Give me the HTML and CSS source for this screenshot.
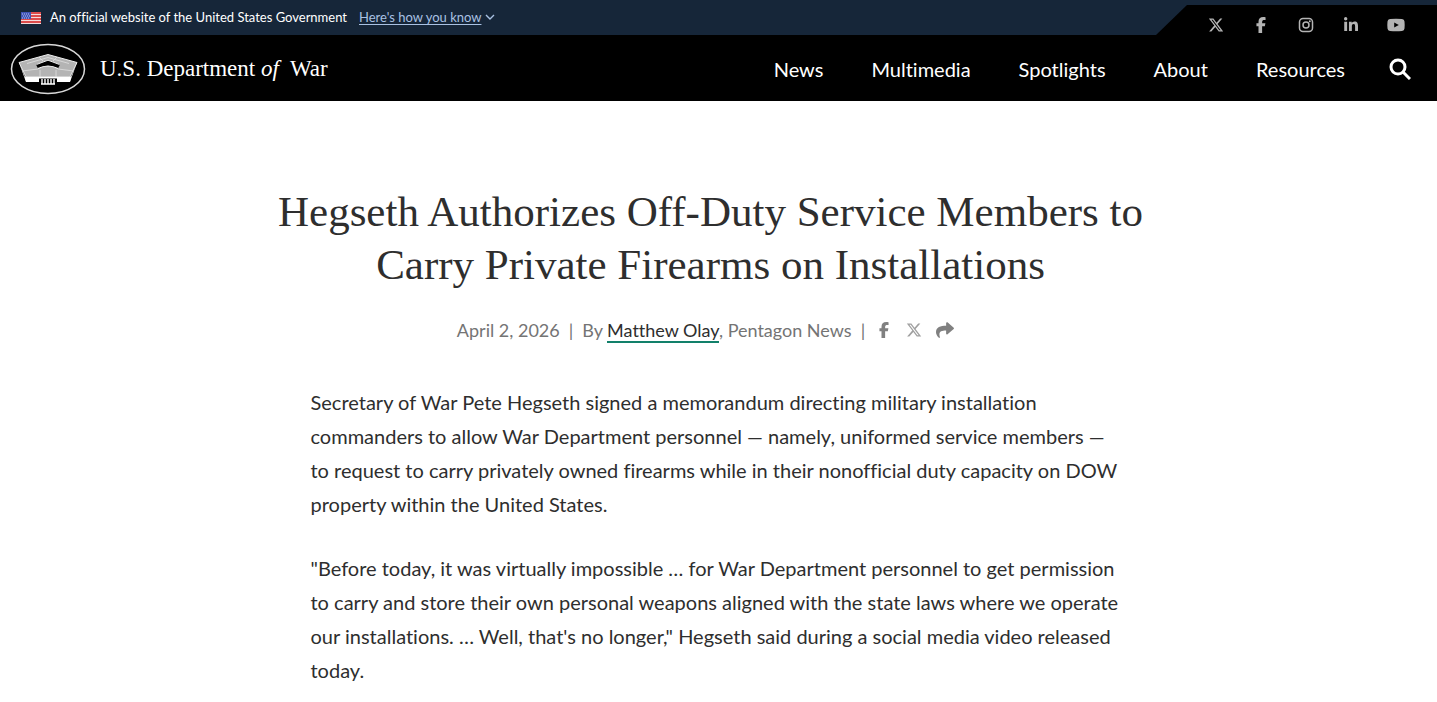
FILE: index.html
```html
<!DOCTYPE html>
<html lang="en">
<head>
    <meta charset="UTF-8">
    <meta name="viewport" content="width=device-width, initial-scale=1.0">
    <title>Hegseth Authorizes Off-Duty Service Members to Carry Private Firearms on Installations</title>
    <link rel="stylesheet" href="styles.css">
</head>
<body>
    <div class="banner">
        <svg class="flag" viewBox="0 0 20 12" aria-hidden="true">
            <rect width="20" height="12" fill="#f4dcdc"/>
            <path d="M0 1h20M0 4h20M0 7h20M0 10h20" stroke="#dc4b4b" stroke-width="2"/>
            <rect width="10" height="7" fill="#3f53b5"/>
            <path d="M1 2h8M2 4h7M1 6h8" stroke="#b9c3f0" stroke-dasharray="1 1"/>
        </svg>
        <span class="official">An official website of the United States Government</span>
        <button class="how" type="button"><span>Here's how you know</span>
            <svg viewBox="0 0 10 6" aria-hidden="true"><path d="M1 1l4 4 4-4" fill="none" stroke="currentColor" stroke-width="1.4"/></svg>
        </button>
        <div class="social">
            <a href="#" aria-label="X"><svg viewBox="0 0 512 512"><path d="M389.2 48h70.6L305.6 224.2 487 464H345L233.7 318.6 106.5 464H35.8L200.7 275.5 26.8 48H172.4L272.9 180.9 389.2 48zM364.4 421.8h39.1L151.1 88h-42L364.4 421.8z"/></svg></a>
            <a href="#" aria-label="Facebook"><svg viewBox="0 0 320 512"><path d="M80 299.3V512H196V299.3h86.5l18-97.8H196V166.9c0-51.7 20.3-71.5 72.7-71.5c16.3 0 29.4 .4 37 1.2V7.9C291.4 4 256.4 0 236.2 0C129.3 0 80 50.5 80 159.4v42.1H14v97.8H80z"/></svg></a>
            <a href="#" aria-label="Instagram"><svg viewBox="0 0 16 16"><g fill="none" stroke="currentColor" stroke-width="1.5"><rect x="1.5" y="1.5" width="13" height="13" rx="3.5"/><circle cx="8" cy="8" r="3"/></g><circle cx="11.8" cy="4.2" r="1"/></svg></a>
            <a href="#" aria-label="LinkedIn"><svg viewBox="0 0 448 512"><path d="M100.28 448H7.4V148.9h92.88zM53.79 108.1C24.09 108.1 0 83.5 0 53.8a53.79 53.79 0 0 1 107.58 0c0 29.7-24.1 54.3-53.79 54.3zM447.9 448h-92.68V302.4c0-34.7-.7-79.2-48.29-79.2-48.29 0-55.69 37.7-55.69 76.7V448h-92.78V148.9h89.08v40.8h1.3c12.4-23.5 42.69-48.3 87.88-48.3 94 0 111.28 61.9 111.28 142.3V448z"/></svg></a>
            <a href="#" aria-label="YouTube"><svg class="wide" viewBox="0 0 18 16"><path fill-rule="evenodd" d="M3 2Q9 1.400 15 2Q17.300 2.200 17.500 4.500Q17.900 8 17.500 11.500Q17.300 13.800 15 14Q9 14.600 3 14Q.7 13.800 .5 11.500Q.1 8 .5 4.500Q.7 2.200 3 2ZM7.200 5.400V10.600L11.800 8Z"/></svg></a>
        </div>
    </div>

    <header class="header">
        <a class="brand" href="#">
            <svg class="seal" viewBox="0 0 76 52" aria-hidden="true">
                <ellipse cx="38" cy="26" rx="36.500" ry="24.500" fill="none" stroke="#d8d8d8" stroke-width="1.500"/>
                <path d="M9 19.500L16 39H60L67 19.500 61 34H15z" fill="#fff"/>
                <path d="M38 11.500L67 19.500 60 34H16L9 19.500z" fill="#b4b4b4" stroke="#eee"/>
                <path d="M38 14.500L59 20.500M38 14.500L17 20.500M12 28L28 26M64 28L48 26M30 27v7M46 27v7M29 14l4 4M47 14l-4 4" fill="none" stroke="#e6e6e6" stroke-width=".7"/>
                <path d="M38 17L50 21.500 48 25.500Q38 20.500 28 25.500L26 21.500z" fill="#000"/>
                <path d="M26.500 21.500L38 17.200 49.500 21.500" fill="none" stroke="#f2f2f2"/>
                <path d="M28 25.500Q38 20.500 48 25.500" fill="none" stroke="#fff" stroke-width="1.200"/>
                <path d="M15 34H61L60 38.500H16z" fill="#fff"/>
                <path d="M29 35.500H47V41.500H29z" fill="#000"/>
                <path d="M31 41H45M32 36v5M35 36v5M38 36v5M41 36v5M44 36v5" stroke="#fff" stroke-width="1.400"/>
            </svg>
            <span>U.S. Department <i>of</i>&nbsp; War</span>
        </a>
        <nav class="nav">
            <a href="#">News</a>
            <a href="#">Multimedia</a>
            <a href="#">Spotlights</a>
            <a href="#">About</a>
            <a href="#">Resources</a>
            <button class="search" type="button" aria-label="Search">
                <svg viewBox="0 0 22 22"><g fill="none" stroke="currentColor" stroke-width="3"><circle cx="9" cy="9" r="7"/><path d="M14 14l7 7"/></g></svg>
            </button>
        </nav>
    </header>

    <main class="article">
        <h1>Hegseth Authorizes Off-Duty Service Members to Carry Private Firearms on Installations</h1>
        <div class="meta">
            <span>April 2, 2026</span>
            <span>|</span>
            <span>By <a class="author" href="#">Matthew Olay</a>, Pentagon News</span>
            <span>|</span>
            <div class="share">
                <a href="#" aria-label="Share on Facebook"><svg viewBox="0 0 320 512"><path d="M80 299.3V512H196V299.3h86.5l18-97.8H196V166.9c0-51.7 20.3-71.5 72.7-71.5c16.3 0 29.4 .4 37 1.2V7.9C291.4 4 256.4 0 236.2 0C129.3 0 80 50.5 80 159.4v42.1H14v97.8H80z"/></svg></a>
                <a class="light" href="#" aria-label="Share on X"><svg viewBox="0 0 512 512"><path d="M389.2 48h70.6L305.6 224.2 487 464H345L233.7 318.6 106.5 464H35.8L200.7 275.5 26.8 48H172.4L272.9 180.9 389.2 48zM364.4 421.8h39.1L151.1 88h-42L364.4 421.8z"/></svg></a>
                <a href="#" aria-label="Share"><svg class="wide" viewBox="0 0 512 512"><path d="M503.691 189.836L327.687 37.851C312.281 24.546 288 35.347 288 56.015v80.053C127.371 137.907 0 170.1 0 322.326c0 61.441 39.581 122.309 83.333 154.132 13.653 9.931 33.111-2.533 28.077-18.631C66.066 312.814 132.917 274.316 288 272.085V360c0 20.7 24.3 31.453 39.687 18.164l176.004-152c11.071-9.562 11.086-26.753 0-36.328z"/></svg></a>
            </div>
        </div>
        <div class="body">
            <p>Secretary of War Pete Hegseth signed a memorandum directing military installation commanders to allow War Department personnel — namely, uniformed service members — to request to carry privately owned firearms while in their nonofficial duty capacity on DOW property within the United States.</p>
            <p>"Before today, it was virtually impossible … for War Department personnel to get permission to carry and store their own personal weapons aligned with the state laws where we operate our installations. … Well, that's no longer," Hegseth said during a social media video released today.</p>
        </div>
    </main>
</body>
</html>
```
FILE: styles.css
```css
* {
    box-sizing: border-box;
}

body {
    margin: 0;
    font-family: Lato, sans-serif;
    font-variant-ligatures: none;
    color: #2e2e2e;
    background-color: #fff;
}

a {
    color: inherit;
    text-decoration: none;
}

button {
    padding: 0;
    border: none;
    background: none;
    font-family: inherit;
    cursor: pointer;
}

svg {
    display: block;
    fill: currentColor;
}

.banner {
    display: flex;
    align-items: center;
    height: 35px;
    padding-left: 21px;
    background-color: #162639;
    color: #fff;
    font-size: 13px;
}

.flag {
    width: 20px;
    height: 12px;
    margin-right: 9px;
}

.official,
.how {
    padding-bottom: 1px;
}

.how {
    display: flex;
    align-items: center;
    gap: 4px;
    margin-left: 12px;
    color: #a9c1e3;
    font-size: 13px;
}

.how span {
    text-decoration: underline;
    text-underline-offset: 2px;
}

.how svg {
    width: 10px;
    height: 6px;
}

.social {
    display: flex;
    align-self: flex-end;
    height: 30px;
    margin-left: auto;
    padding: 10px 19px 0 37px;
    background-color: #000;
    color: #b4b4b4;
    clip-path: polygon(31px 0, 100% 0, 100% 100%, 0 100%);
}

.social a {
    display: flex;
    justify-content: center;
    align-items: center;
    width: 45px;
}

.social svg {
    width: 16px;
    height: 16px;
}

.social .wide {
    width: 18px;
}

.header {
    display: flex;
    justify-content: space-between;
    align-items: center;
    height: 66px;
    padding: 2px 26px 0 10px;
    background-color: #000;
    color: #fff;
}

.brand {
    display: flex;
    align-items: center;
    gap: 14px;
    font-family: "Liberation Serif", serif;
    font-size: 23px;
}

.seal {
    width: 76px;
    height: 52px;
}

.nav {
    display: flex;
    align-items: center;
    gap: 48px;
    font-size: 20px;
}

.search {
    margin-left: -4px;
    color: #fff;
}

.search svg {
    width: 22px;
    height: 22px;
}

.article {
    padding: 84px 16px 0 0;
}

h1 {
    max-width: 900px;
    margin: 0 auto;
    font-family: "Liberation Serif", serif;
    font-size: 43px;
    font-weight: 400;
    line-height: 53px;
    text-align: center;
}

.meta {
    display: flex;
    justify-content: center;
    align-items: center;
    gap: 9px;
    margin-top: 27px;
    padding-right: 10px;
    color: #747474;
    font-size: 18px;
    line-height: 24px;
}

.author {
    border-bottom: 2px solid #12806a;
    color: #2e2e2e;
}

.share {
    display: flex;
    align-items: center;
    gap: 14px;
    margin-left: 2px;
    color: #808080;
}

.share svg {
    width: 16px;
    height: 16px;
}

.share .wide {
    width: 18px;
    height: 18px;
}

.share .light {
    color: #a0a0a0;
}

.body {
    max-width: 820px;
    margin: 43px auto 0;
    padding-left: 10px;
    font-size: 20px;
    line-height: 34px;
}

.body p {
    margin: 0 0 30px;
}
```
